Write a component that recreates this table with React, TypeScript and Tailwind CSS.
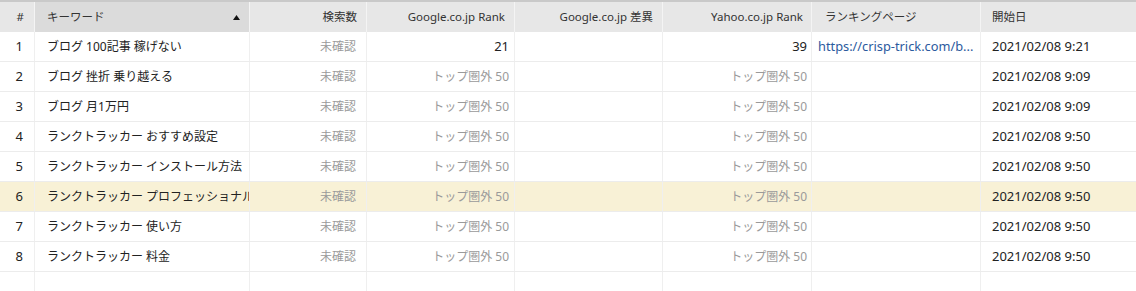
import React from "react";

const cols = "grid grid-cols-[35px_215px_117px_148px_148px_149px_169px_155px]";

type Row = {
  n: number;
  kw: string;
  g: string;
  y: string;
  link?: string;
  date: string;
  hl?: boolean;
};

const OUT = "トップ圏外 50";

const rows: Row[] = [
  { n: 1, kw: "ブログ 100記事 稼げない", g: "21", y: "39", link: "https://crisp-trick.com/b...", date: "2021/02/08 9:21" },
  { n: 2, kw: "ブログ 挫折 乗り越える", g: OUT, y: OUT, date: "2021/02/08 9:09" },
  { n: 3, kw: "ブログ 月1万円", g: OUT, y: OUT, date: "2021/02/08 9:09" },
  { n: 4, kw: "ランクトラッカー おすすめ設定", g: OUT, y: OUT, date: "2021/02/08 9:50" },
  { n: 5, kw: "ランクトラッカー インストール方法", g: OUT, y: OUT, date: "2021/02/08 9:50" },
  { n: 6, kw: "ランクトラッカー プロフェッショナル", g: OUT, y: OUT, date: "2021/02/08 9:50", hl: true },
  { n: 7, kw: "ランクトラッカー 使い方", g: OUT, y: OUT, date: "2021/02/08 9:50" },
  { n: 8, kw: "ランクトラッカー 料金", g: OUT, y: OUT, date: "2021/02/08 9:50" },
];

const cell = "h-full flex items-center overflow-hidden whitespace-nowrap border-r border-[#efefef]";

export default function App() {
  return (
    <div
      className="w-[1136px] h-[291px] bg-white overflow-hidden text-[12px] text-[#222]"
      style={{ fontFamily: '"Noto Sans", "Noto Sans CJK JP", sans-serif' }}
    >
      {/* header */}
      <div className={`${cols} h-[32px] border-t-2 border-[#c9c9c9] bg-[#e7e7e7] text-[#333] text-[11.5px]`}>
        <div className="flex items-center justify-end pr-[10px] border-r border-[#f4f4f4]">#</div>
        <div className="flex items-center justify-between pl-[12px] pr-[9px] bg-[#dbdbdb] border-r border-[#f4f4f4]">
          <span>キーワード</span>
          <svg width="7" height="5" viewBox="0 0 7 5" className="mt-[1px]">
            <polygon points="3.5,0 7,5 0,5" fill="#111" />
          </svg>
        </div>
        <div className="flex items-center justify-end pr-[9px] border-r border-[#f4f4f4]">検索数</div>
        <div className="flex items-center justify-end pr-[9px] border-r border-[#f4f4f4]">Google.co.jp Rank</div>
        <div className="flex items-center justify-end pr-[9px] border-r border-[#f4f4f4]">Google.co.jp 差異</div>
        <div className="flex items-center justify-end pr-[8px] border-r border-[#f4f4f4]">Yahoo.co.jp Rank</div>
        <div className="flex items-center pl-[13px] border-r border-[#f4f4f4]">ランキングページ</div>
        <div className="flex items-center pl-[11px]">開始日</div>
      </div>

      {rows.map((r) => (
        <div
          key={r.n}
          className={`${cols} h-[30px] border-b border-[#ececec] ${r.hl ? "bg-[#f8f1d6]" : "bg-white"}`}
        >
          <div className={`${cell} justify-end pr-[11px] text-[13px]`}>{r.n}</div>
          <div className={`${cell} pl-[12px]`}>{r.kw}</div>
          <div className={`${cell} justify-end pr-[10px] text-[#9a9a9a]`}>未確認</div>
          <div className={`${cell} justify-end pr-[5px] ${r.g === OUT ? "text-[#9a9a9a]" : "text-[#222] text-[13px]"}`}>{r.g}</div>
          <div className={cell}></div>
          <div className={`${cell} justify-end pr-[4px] ${r.y === OUT ? "text-[#9a9a9a]" : "text-[#222] text-[13px]"}`}>{r.y}</div>
          <div className={`${cell} pl-[6px] pr-[2px]`}>
            {r.link ? (
              <span className="text-[#2b5a9e] text-[12.8px]">{r.link}</span>
            ) : null}
          </div>
          <div className="h-full flex items-center pl-[11px] whitespace-nowrap text-[13px]">{r.date}</div>
        </div>
      ))}

      <div className={`${cols} h-[30px]`}>
        {Array.from({ length: 7 }).map((_, i) => (
          <div key={i} className="h-full border-r border-[#efefef]" />
        ))}
        <div className="h-full" />
      </div>
    </div>
  );
}
